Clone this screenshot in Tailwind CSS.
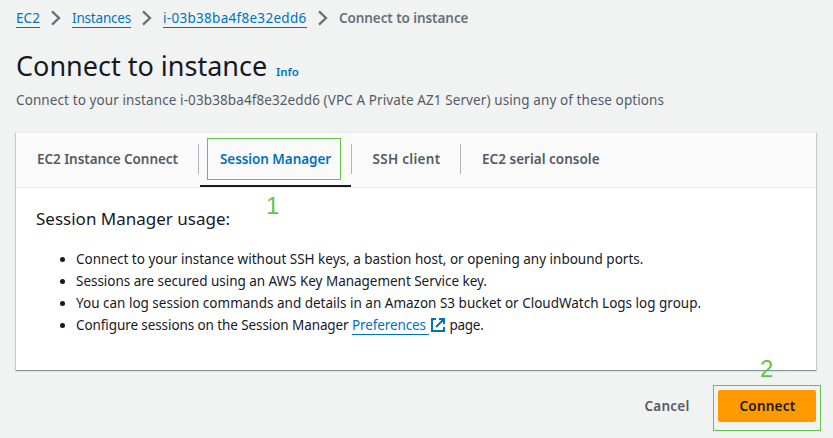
<!DOCTYPE html>
<html lang="en">
<head>
<meta charset="utf-8">
<title>Connect to instance</title>
<script src="https://cdn.jsdelivr.net/npm/@tailwindcss/browser@4"></script>
</head>
<body class="relative h-[438px] w-[833px] overflow-hidden bg-[#f1f3f3] font-['Noto_Sans','Open_Sans',sans-serif] text-[13.5px] leading-[22px] text-[#16191f] whitespace-nowrap">
  <nav class="flex h-[36px] items-start pt-[7px] pl-4 text-[#0073bb]">
    <a class="h-[21px] w-6 border-b border-[#0073bb] tracking-[0.08px]">EC2</a>
    <svg class="mt-[3px] ml-[11px] mr-[11px] h-4 w-[10px]" viewBox="0 0 10 16" fill="none" stroke="#687078" stroke-width="2.3"><path d="M1 1.3 8 8l-7 6.7"/></svg>
    <a class="h-[21px] w-[59px] border-b border-[#0073bb] tracking-[-0.19px]">Instances</a>
    <svg class="mt-[3px] ml-[11px] mr-[11px] h-4 w-[10px]" viewBox="0 0 10 16" fill="none" stroke="#687078" stroke-width="2.3"><path d="M1 1.3 8 8l-7 6.7"/></svg>
    <a class="h-[21px] w-[144px] border-b border-[#0073bb] tracking-[0.29px]">i-03b38ba4f8e32edd6</a>
    <svg class="mt-[3px] ml-[11px] mr-[11px] h-4 w-[10px]" viewBox="0 0 10 16" fill="none" stroke="#687078" stroke-width="2.3"><path d="M1 1.3 8 8l-7 6.7"/></svg>
    <span class="font-semibold tracking-[-0.08px] text-[#687078]">Connect to instance</span>
  </nav>
  <header class="h-24 pl-4">
    <div class="flex h-[53px] items-baseline pt-[13px]">
      <h1 class="w-[260px] text-[27px] leading-[34px]">Connect to instance</h1>
      <a class="text-[11.5px] font-semibold text-[#0073bb]">Info</a>
    </div>
    <p class="tracking-[0.1px] text-[#545b64]">Connect to your instance i-03b38ba4f8e32edd6 (VPC A Private AZ1 Server) using any of these options</p>
  </header>
  <main class="ml-4 h-[238px] w-[800px] bg-white shadow-[0_1px_0_0_#879596,0_1px_1px_0_rgba(0,28,36,0.2),1px_1px_1px_0_rgba(0,28,36,0.15),-1px_1px_1px_0_rgba(0,28,36,0.15)]">
    <div class="flex h-14 border-t border-b border-[#eaeded] bg-[#fafafa] font-semibold text-[#545b64]">
      <div class="flex w-[183px] pl-[21px] pt-[11px]">
        <span class="mt-[4px] w-[161px] tracking-[-0.06px]">EC2 Instance Connect</span><i class="h-[30px] w-px bg-[#aab7b8]"></i>
      </div>
      <div class="relative flex w-[153px] pl-[21px] pt-[11px]">
        <span class="mt-[4px] w-[131px] tracking-[-0.07px] text-[#0073bb]">Session Manager</span><i class="h-[30px] w-px shrink-0 bg-[#aab7b8]"></i>
        <b class="absolute top-[52px] left-[1px] h-[2px] w-[151px] bg-[#16191f]"></b>
        <b class="absolute top-[5px] left-2 h-[42px] w-[134px] border border-[#5ec748]"></b>
      </div>
      <div class="flex w-[109px] pl-[20.5px] pt-[11px]">
        <span class="mt-[4px] w-[87.5px] tracking-[0.3px]">SSH client</span><i class="h-[30px] w-px bg-[#aab7b8]"></i>
      </div>
      <div class="pl-[21px] pt-[15px] tracking-[0.02px]">EC2 serial console</div>
    </div>
    <section class="pt-[19px] pl-5">
      <h2 class="h-[41px] text-[17px] leading-6">Session Manager usage:</h2>
      <ul class="list-none">
        <li class="flex h-[22px] items-center pl-6"><i class="mr-[11px] size-[5px] rounded-full bg-[#16191f]"></i>Connect to your instance without SSH keys, a bastion host, or opening any inbound ports.</li>
        <li class="flex h-[22px] items-center pl-6 tracking-[-0.03px]"><i class="mr-[11px] size-[5px] rounded-full bg-[#16191f]"></i>Sessions are secured using an AWS Key Management Service key.</li>
        <li class="flex h-[22px] items-center pl-6"><i class="mr-[11px] size-[5px] rounded-full bg-[#16191f]"></i>You can log session commands and details in an Amazon S3 bucket or CloudWatch Logs log group.</li>
        <li class="flex h-[22px] items-center pl-6"><i class="mr-[11px] size-[5px] rounded-full bg-[#16191f]"></i><span class="w-[276px] tracking-[-0.09px]">Configure sessions on the Session Manager</span><a class="h-5 w-[77px] border-b border-[#0073bb] leading-5 tracking-[-0.11px] text-[#0073bb]">Preferences</a>
          <svg class="ml-[2px] mr-1 size-[14px]" viewBox="0 0 14 14" fill="none" stroke="#0073bb" stroke-width="2"><path d="M5 1H1v12h12V9M8 1h5v5M12.5 1.5 5 9"/></svg><span class="ml-[0.5px] tracking-[-0.28px]">page.</span></li>
      </ul>
    </section>
  </main>
  <footer class="flex pt-5 font-semibold">
    <button class="ml-[644.5px] h-8 w-[73.5px] text-left tracking-[0.23px] text-[#545b64]">Cancel</button>
    <button class="h-8 w-[98px] rounded-[2px] bg-[#ff9900] pl-[1px] tracking-[0.24px]">Connect</button>
  </footer>
  <span class="absolute top-[385px] left-[713px] h-[46px] w-[108px] border border-[#5ec748]"></span>
  <span class="absolute top-[193px] left-[266px] font-['Liberation_Sans',sans-serif] text-[24px] leading-[26px] text-[#5ec748]">1</span>
  <span class="absolute top-[356px] left-[760px] font-['Liberation_Sans',sans-serif] text-[24px] leading-[26px] text-[#5ec748]">2</span>
</body>
</html>
